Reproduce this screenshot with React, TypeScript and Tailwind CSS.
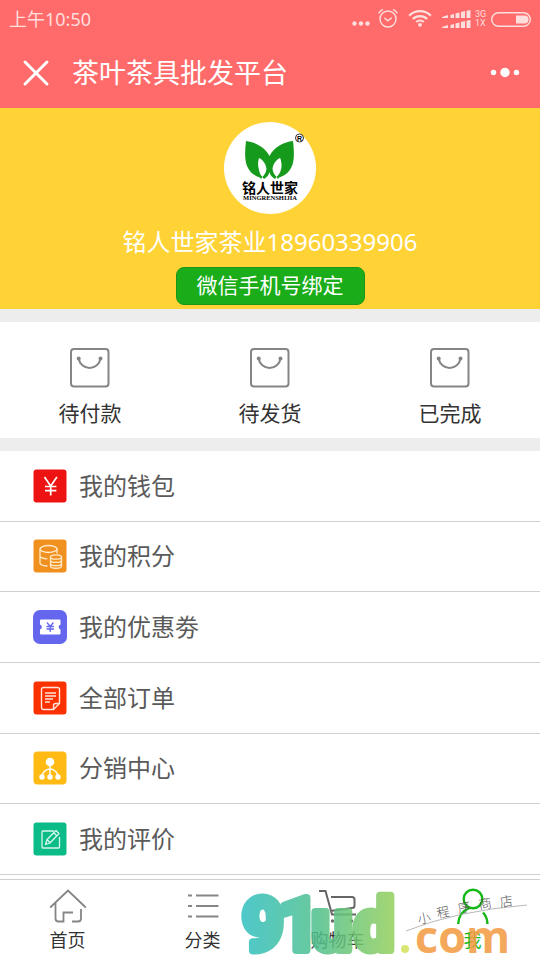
import type { ReactNode } from "react";
import { X } from "lucide-react";

interface MenuEntry {
  label: string;
  icon: ReactNode;
}

const AlarmIcon = () => (
  <svg width="20" height="20" viewBox="0 0 20 20" fill="none" stroke="#ffdede" strokeWidth="1.4" strokeLinecap="round">
    <circle cx="10" cy="10" r="8" />
    <path d="M6.800 9.200l3 2.600 3.600-2.800M1 3.900a8 8 0 0 1 3.600-3.200M15.400.700a8 8 0 0 1 3.600 3.200" />
  </svg>
);

const WifiIcon = () => (
  <svg width="24" height="18" viewBox="0 0 24 18" fill="none" stroke="#ffdede" strokeWidth="2.2">
    <path d="M1.200 5.600a15.400 15.400 0 0 1 21.600 0M4.800 9a10.300 10.300 0 0 1 14.400 0M8.200 12a5.600 5.600 0 0 1 7.600 0" />
    <circle cx="12" cy="14.800" r="1.900" fill="#ffdede" stroke="none" />
  </svg>
);

const SignalIcon = () => (
  <svg width="29" height="19" viewBox="0 0 29 19" fill="#ffdede">
    <path d="M0 8V7l6-2v3zM8.500 5l3.500-1v4H8.500zM13.500 3.500l4-1V8h-4zM19 2l4-1v7h-4zM24.500.800l4-.8v8h-4z" />
    <path d="M0 18v-1l6-2v3zM8.500 15l3.500-1v4H8.500zM13.500 13.500l4-1V18h-4zM19 12l4-1v7h-4zM24.500 10.800l4-.8v8h-4z" />
  </svg>
);

const BatteryIcon = () => (
  <svg width="40" height="15" viewBox="0 0 40 15">
    <rect x=".7" y=".7" width="38.600" height="13.600" rx="6.800" fill="none" stroke="#ffdede" strokeWidth="1.400" />
    <path d="M25 3.500h8.500a4 4 0 0 1 0 8H25z" fill="#ffdede" />
  </svg>
);

const StatusBar = () => (
  <div className="flex h-[38px] items-center justify-between px-[9px] text-[18px] text-[#ffdede]">
    <span>上午10:50</span>
    <div className="flex items-center">
      <svg width="18" height="20" viewBox="0 0 18 20" fill="#ffdede">
        <circle cx="2.500" cy="14.500" r="2.200" />
        <circle cx="9" cy="14.500" r="2.200" />
        <circle cx="15.500" cy="14.500" r="2.200" />
      </svg>
      <div className="ml-2 flex items-center gap-2.5">
        <AlarmIcon />
        <WifiIcon />
        <SignalIcon />
      </div>
      <div className="mx-1 w-3 font-['Roboto',sans-serif] text-[9px] leading-[9px]">
        <div>3G</div>
        <div>1X</div>
      </div>
      <BatteryIcon />
    </div>
  </div>
);

const BrandLogo = () => (
  <svg width="92" height="92" viewBox="0 0 92 92" role="img" aria-label="铭人世家">
    <circle cx="46" cy="46" r="46" fill="#fff" />
    <path
      fill="#159a1c"
      d="M22 19C31 20 41 25 45.500 34C50 25 60 20 69 19C70 28 71 39 67 46C64 52 59 54 55 55.500L54 57L52.500 55C56 52 58 47 57.500 42C57 39 57 37 56 36C52 38 49 42 48.500 47C49 51 51 53 52.500 55L51 57C48 55 46 53 45.500 50C45 53 43 55 40 57L38.500 55C40 53 42 51 42.500 47C42 42 39 38 35 36C34 39 33.500 43 35 48C35.500 51 36.500 53 38.500 55L37 57L36 55.500C32 54 27 52 24 46C20 39 21 28 22 19Z"
    />
    <circle cx="75.500" cy="16" r="4" fill="none" stroke="#333" strokeWidth="1" />
    <text x="75.500" y="18.500" textAnchor="middle" fontSize="7" fontWeight="700" fontFamily="Liberation Sans, sans-serif">
      R
    </text>
    <text x="46" y="71" textAnchor="middle" fontSize="14" fontWeight="700" fontFamily="Noto Sans CJK SC, sans-serif">
      铭人世家
    </text>
    <text x="46" y="78" textAnchor="middle" fontSize="6.500" fontWeight="700" fontFamily="Liberation Serif, serif">
      MINGRENSHIJIA
    </text>
  </svg>
);

const BagIcon = () => (
  <svg width="40" height="40" viewBox="0 0 40 40" fill="none" stroke="#858585" strokeWidth="2">
    <rect x="1" y="1" width="37.500" height="37.500" rx="3" />
    <path d="M8.700 10.500a11 11 0 0 0 21.800 0" />
    <circle cx="8.700" cy="10.500" r="2" fill="#858585" stroke="none" />
    <circle cx="30.500" cy="10.500" r="2" fill="#858585" stroke="none" />
  </svg>
);

const WalletIcon = () => (
  <svg width="34" height="34" viewBox="0 0 34 34">
    <rect x=".5" y=".5" width="33" height="33" rx="3" fill="#ee1313" />
    <path d="M11.500 8l6.200 9 6.200-9M17.700 17v9.500M12 17.500h11.400M12 21.700h11.400" fill="none" stroke="#fff" strokeWidth="1.700" />
  </svg>
);

const PointsIcon = () => (
  <svg width="34" height="34" viewBox="0 0 34 34">
    <rect x=".5" y=".5" width="33" height="33" rx="3" fill="#f0901f" />
    <g fill="none" stroke="#ffe9c8" strokeWidth="1.300" strokeLinecap="round">
      <ellipse cx="15.500" cy="10" rx="8.500" ry="3.500" />
      <path d="M7 10v14c0 1.600 3 2.700 7 3M24 10v4M7 17.500c1 1.400 3.500 2.200 7 2.300" />
      <ellipse cx="23" cy="18" rx="5.500" ry="2.200" />
      <path d="M17.500 18v9c0 3 11 3 11 0v-9M17.500 21.200c0 3 11 3 11 0M17.500 24.400c0 3 11 3 11 0" />
    </g>
  </svg>
);

const CouponIcon = () => (
  <svg width="34" height="34" viewBox="0 0 34 34">
    <rect width="34" height="34" rx="7" fill="#6466ee" />
    <path d="M8 9.500h18.500a1 1 0 0 1 1 1v4a2.600 2.600 0 0 0 0 5v4a1 1 0 0 1-1 1H8a1 1 0 0 1-1-1v-4a2.600 2.600 0 0 0 0-5v-4a1 1 0 0 1 1-1z" fill="#fff" />
    <path d="M14 12.500l3.200 4 3.200-4M17.200 16.500v5.500M13.500 16.500h7.400M13.500 19h7.400" fill="none" stroke="#6466ee" strokeWidth="1.300" />
  </svg>
);

const OrderIcon = () => (
  <svg width="34" height="34" viewBox="0 0 34 34">
    <rect x=".5" y=".5" width="33" height="33" rx="3" fill="#fb3200" />
    <path
      d="M20.500 28.500h-10a2 2 0 0 1-2-2V8.500a2 2 0 0 1 2-2h14a2 2 0 0 1 2 2V22.500zM20.500 28.500v-4a2 2 0 0 1 2-2h4M12 12h11M12 15h11M12 18h8M12 21h5"
      fill="none"
      stroke="#ffe3db"
      strokeWidth="1.400"
    />
  </svg>
);

const NetworkIcon = () => (
  <svg width="34" height="34" viewBox="0 0 34 34">
    <rect x=".5" y=".5" width="33" height="33" rx="4" fill="#ffba14" />
    <g fill="#fff">
      <circle cx="17" cy="11" r="4.300" />
      <circle cx="9" cy="26" r="2.700" />
      <circle cx="17" cy="26" r="2.700" />
      <circle cx="25" cy="26" r="2.700" />
    </g>
    <path d="M17 13v12M9 26c0-4 3.500-8 8-8s8 4 8 8" fill="none" stroke="#fff" strokeWidth="1.400" />
  </svg>
);

const ReviewIcon = () => (
  <svg width="34" height="34" viewBox="0 0 34 34">
    <rect x=".5" y=".5" width="33" height="33" rx="3" fill="#0bbb88" />
    <g fill="none" stroke="#d8f8ed" strokeWidth="1.300" strokeLinejoin="round">
      <path d="M21 9H10a1 1 0 0 0-1 1v15a1 1 0 0 0 1 1h15.500a1 1 0 0 0 1-1V15" />
      <path d="M12.500 22.500l1.500-5L23 8.500l3 3-9 9.500zM14 17.500l3 3.300M20.800 10.700l3 3.200" />
    </g>
  </svg>
);

const HomeIcon = () => (
  <svg width="38" height="36" viewBox="0 0 38 36" fill="none" stroke="#858585" strokeWidth="1.800">
    <path d="M1.200 19.500L19 2.500l17.800 17M6.500 15v15.500a3 3 0 0 0 3 3h5v-9H24M32 21v9.500a3 3 0 0 1-3 3h-6" />
  </svg>
);

const ListIcon = () => (
  <svg width="32" height="36" viewBox="0 0 32 36" fill="none" stroke="#858585" strokeWidth="1.800">
    <path d="M1 7.500h4M9 7.500h22.500M1 18h4M9 18h22.500M1 28.500h4M9 28.500h22.500" />
  </svg>
);

const CartIcon = () => (
  <svg width="38" height="36" viewBox="0 0 38 36" fill="none" stroke="#666" strokeWidth="2">
    <path d="M0 3h6.500L13 26.500h24M12 9h21a2.500 2.500 0 0 1 2.500 2.500v6a2.500 2.500 0 0 1-2.500 2.500L11.500 23" />
    <circle cx="13.500" cy="33" r="1.700" fill="#666" stroke="none" />
    <circle cx="32.500" cy="33" r="1.700" fill="#666" stroke="none" />
  </svg>
);

const UserIcon = () => (
  <svg width="34" height="36" viewBox="0 0 34 36" fill="none" stroke="#14b814" strokeWidth="2.400">
    <circle cx="17" cy="11" r="9.300" />
    <path d="M13.500 20C7 22.500 2.500 28 2.200 36M27 24.500c3 3 4.300 7 4.500 11.500" />
  </svg>
);

const Watermark = () => (
  <svg
    className="pointer-events-none absolute bottom-0 right-0"
    width="300"
    height="80"
    viewBox="240 880 300 80"
    aria-hidden="true"
  >
    <defs>
      <linearGradient id="brand" gradientUnits="userSpaceOnUse" x1="243" y1="0" x2="393" y2="0">
        <stop offset="0" stopColor="#30bfc0" />
        <stop offset=".5" stopColor="#50c08c" />
        <stop offset="1" stopColor="#93cf5c" />
      </linearGradient>
    </defs>
    <g opacity=".85">
      <g
        fill="url(#brand)"
        stroke="url(#brand)"
        strokeWidth="8"
        strokeLinejoin="round"
        fontFamily="Roboto, sans-serif"
        fontWeight="700"
        fontSize="72"
        textAnchor="middle"
      >
        <text x="263" y="950">9</text>
        <text x="299" y="950">1</text>
        <text x="332" y="950">u</text>
        <text x="374" y="950">d</text>
      </g>
      <circle cx="405" cy="949" r="4" fill="#d3e35a" />
      <text x="415" y="953" fill="#f39a40" fontFamily="Open Sans, sans-serif" fontWeight="700" fontSize="45">
        com
      </text>
    </g>
    <path d="M406 931Q455 911 527 905" fill="none" stroke="#999" strokeWidth=".7" />
    <g fill="#555" fontFamily="Noto Sans CJK SC, sans-serif" fontWeight="300" fontSize="13" textAnchor="middle">
      <text transform="translate(425 923) rotate(-12)">小</text>
      <text transform="translate(444 917) rotate(-12)">程</text>
      <text transform="translate(465 912) rotate(-12)">序</text>
      <text transform="translate(486 908) rotate(-10)">商</text>
      <text transform="translate(507 906) rotate(-8)">店</text>
    </g>
  </svg>
);

const orders = ["待付款", "待发货", "已完成"];

const menu: MenuEntry[] = [
  { label: "我的钱包", icon: <WalletIcon /> },
  { label: "我的积分", icon: <PointsIcon /> },
  { label: "我的优惠劵", icon: <CouponIcon /> },
  { label: "全部订单", icon: <OrderIcon /> },
  { label: "分销中心", icon: <NetworkIcon /> },
  { label: "我的评价", icon: <ReviewIcon /> },
];

const tabs: MenuEntry[] = [
  { label: "首页", icon: <HomeIcon /> },
  { label: "分类", icon: <ListIcon /> },
  { label: "购物车", icon: <CartIcon /> },
  { label: "我", icon: <UserIcon /> },
];

const App = () => {
  return (
    <div className="flex min-h-screen flex-col bg-white font-['Noto_Sans','Noto_Sans_CJK_SC',sans-serif]">
      <header className="bg-[#ff6b6b] text-white">
        <StatusBar />
        <div className="flex h-[70px] items-center pl-[14px] pr-5">
          <button type="button" aria-label="关闭">
            <X size={44} strokeWidth={1.6} />
          </button>
          <h1 className="ml-[14px] flex-1 text-[27px] leading-8">茶叶茶具批发平台</h1>
          <button type="button" aria-label="更多">
            <svg width="30" height="12" viewBox="0 0 30 12" fill="currentColor">
              <circle cx="3.500" cy="5.500" r="2.700" />
              <circle cx="15" cy="5.500" r="4.700" />
              <circle cx="26.500" cy="5.500" r="2.700" />
            </svg>
          </button>
        </div>
      </header>

      <section className="flex flex-col items-center bg-[#ffd236] pb-1 pt-[14px] text-white">
        <BrandLogo />
        <p className="mt-3 text-2xl leading-8">铭人世家茶业18960339906</p>
        <button
          type="button"
          className="mt-[9px] rounded-lg border border-[#18951a] bg-[#1aad19] px-5 pb-0.5 text-[21px] leading-[34px]"
        >
          微信手机号绑定
        </button>
      </section>

      <nav className="grid grid-cols-3 border-y-[13px] border-[#ededed] pb-2 pt-[26px]">
        {orders.map((label) => (
          <a key={label} href="#" className="flex flex-col items-center gap-2 text-[21px] leading-[34px] text-[#333]">
            <BagIcon />
            {label}
          </a>
        ))}
      </nav>

      <ul className="grid flex-1 auto-rows-fr pb-1">
        {menu.map(({ label, icon }) => (
          <li key={label} className="border-b border-[#d0d0d0]">
            <a href="#" className="flex h-full min-h-16 items-center gap-3 pl-[33px] text-2xl text-[#5a5a5a]">
              {icon}
              {label}
            </a>
          </li>
        ))}
      </ul>

      <footer className="relative border-t border-[#cfcfcf]">
        <nav className="grid grid-cols-4 pb-2 pt-2">
          {tabs.map(({ label, icon }) => (
            <a
              key={label}
              href="#"
              className="flex flex-col items-center gap-1 text-[18px] leading-6 text-[#333] last:text-[#14b814]"
            >
              {icon}
              {label}
            </a>
          ))}
        </nav>
        <Watermark />
      </footer>
    </div>
  );
};

export default App;
